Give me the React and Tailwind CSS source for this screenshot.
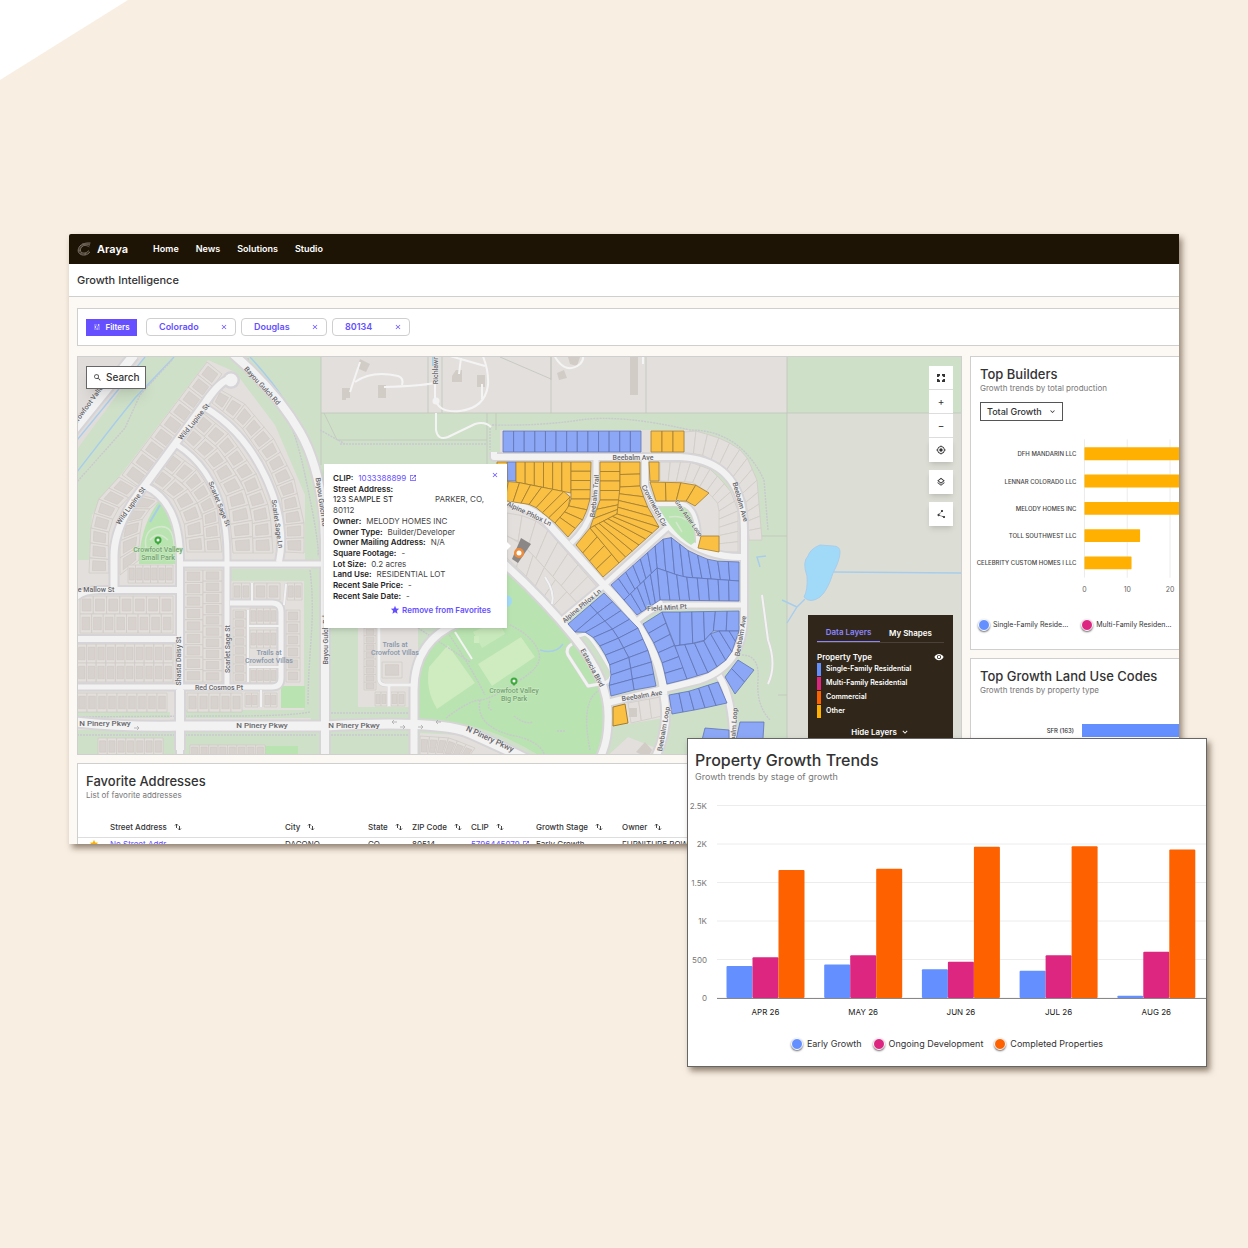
import React from "react";
import {
  MdClose,
  MdKeyboardArrowDown,
  MdMyLocation,
  MdOpenInNew,
  MdOutlineLayers,
  MdSearch,
  MdStar,
  MdTune,
  MdVisibility,
} from "react-icons/md";

const BLUE = "#648fff";
const PINK = "#dc267f";
const ORANGE = "#fe6100";
const YELLOW = "#ffb000";

const NAV_LINKS = ["Home", "News", "Solutions", "Studio"];

const FILTER_CHIPS = [
  { label: "Colorado", width: "w-[90px]" },
  { label: "Douglas", width: "w-[86px]" },
  { label: "80134", width: "w-[78px]" },
];

const BUILDERS = [
  { name: "DFH MANDARIN LLC", value: 34 },
  { name: "LENNAR COLORADO LLC", value: 31 },
  { name: "MELODY HOMES INC", value: 26 },
  { name: "TOLL SOUTHWEST LLC", value: 13 },
  { name: "CELEBRITY CUSTOM HOMES I LLC", value: 11 },
];

const TRENDS = [
  { month: "APR 26", early: 415, ongoing: 530, completed: 1662 },
  { month: "MAY 26", early: 435, ongoing: 555, completed: 1680 },
  { month: "JUN 26", early: 375, ongoing: 470, completed: 1965 },
  { month: "JUL 26", early: 355, ongoing: 555, completed: 1972 },
  { month: "AUG 26", early: 30, ongoing: 600, completed: 1930 },
];

const LAYERS = [
  { label: "Single-Family Residential", color: "bg-[#648fff]" },
  { label: "Multi-Family Residential", color: "bg-[#dc267f]" },
  { label: "Commercial", color: "bg-[#fe6100]" },
  { label: "Other", color: "bg-[#ffb000]" },
];

/* ---------- Map geometry ---------- */

// point at fraction t along a polyline
const pointAt = (line, t) => {
  const lens = line.slice(1).map((p, i) => Math.hypot(p[0] - line[i][0], p[1] - line[i][1]));
  let left = lens.reduce((a, b) => a + b, 0) * t;
  for (let i = 0; i < lens.length; i++) {
    if (left <= lens[i] || i === lens.length - 1) {
      const k = lens[i] ? left / lens[i] : 0;
      return [
        line[i][0] + (line[i + 1][0] - line[i][0]) * k,
        line[i][1] + (line[i + 1][1] - line[i][1]) * k,
      ];
    }
    left -= lens[i];
  }
};

// "x,y x,y" -> [[x, y], ...]
const parse = (s) => s.split(" ").map((p) => p.split(",").map(Number));

// row of n lots between two edges
const Lots = ({ a, b, n, fill = "#e3dfdc", stroke = "#d0cbc7", houses = false }) => {
  const top = parse(a);
  const bottom = parse(b);
  return Array.from({ length: n }, (_, i) => {
    const quad = [
      pointAt(top, i / n),
      pointAt(top, (i + 1) / n),
      pointAt(bottom, (i + 1) / n),
      pointAt(bottom, i / n),
    ];
    const cx = quad.reduce((s, p) => s + p[0], 0) / 4;
    const cy = quad.reduce((s, p) => s + p[1], 0) / 4;
    const house = quad.map((p) => [cx + (p[0] - cx) * 0.66, cy + (p[1] - cy) * 0.66]);
    return (
      <g key={i}>
        <polygon points={quad.join(" ")} fill={fill} stroke={stroke} strokeWidth="0.8" />
        {houses && <polygon points={house.join(" ")} fill="#d8d2ce" stroke="#cec8c3" strokeWidth="0.6" />}
      </g>
    );
  });
};

const HOUSE_ROWS = [
  ["207,362 122,475", "222,374 140,488", 9],
  ["119,477 98,500 91,525 89,573", "138,488 115,512 108,535 109,573", 7],
  ["219,389 244,403 274,439 294,479 304,523 304,553", "212,403 240,425 268,465 282,500 285,552", 13],
  ["203,413 230,435 257,475 270,510 273,553", "193,427 220,450 243,485 252,515 253,553", 10],
  ["193,427 220,450 243,485 252,515 253,553", "183,440 210,465 228,500 233,553", 9],
  ["173,452 200,472 217,505 222,552", "162,468 186,486 202,510 205,552", 8],
  ["162,468 186,486 202,510 205,552", "151,483 172,497 184,520 187,552", 6],
  ["140,495 125,515 120,540 120,575", "160,500 143,515 139,540 139,560", 5],
  ["128,565 173,565", "128,583 173,583", 6],
  ["184,570 184,682", "203,570 203,682", 9],
  ["203,570 203,682", "222,570 222,682", 10],
  ["80,596 173,596", "80,614 173,614", 7],
  ["80,614 173,614", "80,633 173,633", 8],
  ["77,644 173,644", "77,663 173,663", 10],
  ["77,663 173,663", "77,682 173,682", 10],
  ["77,693 167,693", "77,712 167,712", 9],
  ["187,693 242,693", "187,712 242,712", 5],
  ["98,738 163,738", "98,755 163,755", 7],
  ["190,745 265,745", "190,757 265,757", 8],
  ["233,583 250,583", "233,600 250,600", 2],
  ["254,583 280,583", "254,600 280,600", 2],
  ["287,583 302,583", "287,600 302,600", 2],
  ["233,610 233,682", "246,610 246,682", 8],
  ["250,608 277,608", "250,624 277,624", 4],
  ["250,630 277,630", "250,648 277,648", 4],
  ["250,668 277,668", "250,683 277,683", 4],
  ["286,610 286,682", "300,610 300,682", 6],
  ["245,693 258,693", "245,707 258,707", 2],
  ["264,693 277,693", "264,707 277,707", 2],
  ["364,628 364,690", "376,628 376,690", 8],
  ["382,662 382,678", "402,662 402,678", 1],
  ["375,692 387,692", "375,706 387,706", 2],
  ["391,692 405,692", "391,706 405,706", 2],
  ["420,736 450,738 475,748", "420,755 445,756 465,762", 6],
];

const PLAIN_ROWS = [
  ["684,432 697,431 725,440 745,453 757,480 762,540", "684,453 700,454 722,465 739,485 747,505 749,540", 13],
  ["660,462 690,462 712,470 730,490 738,510 738,552", "660,481 692,482 709,493 719,505 719,530 719,552", 14],
  ["507,513 530,517 545,527 598,588", "507,536 517,540 530,552 578,604", 8],
  ["507,536 517,540 530,552 578,604", "507,558 525,575 553,605 562,616", 6],
  ["628,703 660,697", "631,723 662,716", 3],
];

const BLUE_ROWS = [
  ["503,431 641,431", "503,452 641,452", 13],
  ["507,462 516,462", "507,481 516,481", 1],
  ["655,546 668,535 690,552 712,561 739,562", "657,568 683,577 739,581", 9],
  ["657,568 683,577 739,581", "660,600 739,601", 8],
  ["611,585 655,546", "624,600 657,568", 6],
  ["624,600 657,568", "637,615 660,600", 5],
  ["643,624 655,645 663,665 667,684", "662,612 672,640 680,658 687,679", 6],
  ["662,612 680,612", "675,646 680,645", 1],
  ["680,612 739,611", "680,645 703,642 713,631 739,631", 5],
  ["675,646 703,642 713,631 739,631", "687,679 710,672 730,657 739,631", 7],
  ["604,593 638,628 650,655 656,686", "590,605 615,632 629,658 634,690", 9],
  ["590,605 615,632 629,658 634,690", "568,624 576,633 589,632 603,650 612,670 609,684 611,696", 9],
  ["669,695 690,691 718,682", "672,714 700,709 727,703", 5],
  ["738,660 725,677", "754,670 735,694", 2],
  ["705,728 729,730", "698,756 729,756", 1],
  ["740,722 764,722", "736,740 762,756", 1],
];

const YELLOW_ROWS = [
  ["651,431 684,431", "651,452 684,452", 3],
  ["497,462 507,462", "497,481 507,481", 1],
  ["516,462 571,462", "516,482 571,493", 6],
  ["497,481 516,482 571,493 568,508", "497,500 507,501 533,505 555,523", 8],
  ["571,462 571,499", "591,462 590,499", 4],
  ["571,499 568,508 555,523", "590,499 585,517 568,537", 4],
  ["600,462 600,500", "620,462 620,500", 4],
  ["600,500 590,528", "620,500 617,514", 3],
  ["620,462 620,487", "640,462 640,486", 2],
  ["620,487 617,514", "640,486 646,504 659,527", 4],
  ["576,545 603,577", "590,528 619,563", 4],
  ["590,528 617,514", "619,563 659,527", 6],
  ["649,462 659,462", "650,481 659,481", 1],
  ["650,482 692,483 709,493", "656,501 686,501 695,506", 4],
  ["701,536 719,536", "698,548 719,552", 1],
];

const ROADS = [
  { d: "M134 355L72 432", w: 9 },
  { d: "M233 354Q277 392 300 432T325 540V756", w: 8 },
  { d: "M231 380Q222 378 205 403L145 485Q114 524 114 556V590", w: 7 },
  { d: "M206 408Q245 432 266 478T279 562", w: 6 },
  { d: "M177 445Q228 478 227 560V688", w: 5 },
  { d: "M145 486Q180 502 180 560V756", w: 6 },
  { d: "M181 564H325", w: 5 },
  { d: "M76 597Q84 590 100 590H179", w: 6 },
  { d: "M76 639H179", w: 6 },
  { d: "M76 687H272Q281 687 281 678V612Q281 603 272 603H230", w: 5 },
  { d: "M284 605L286 584M252 583V602M248 610V682M248 626H280M248 667H280M261 690V707", w: 2 },
  { d: "M180 690V750", w: 8 },
  { d: "M76 722Q120 727 180 726H325Q440 720 470 733T540 766", w: 9 },
  { d: "M460 622Q414 640 414 690V756", w: 7 },
  { d: "M379 628V680Q380 685 386 685H412M389 686V706", w: 3 },
  { d: "M494 452V457H680Q744 460 744 530V615Q744 665 700 680L607 703", w: 6 },
  { d: "M494 500Q522 502 545 520L604 585Q660 640 664 695Q670 730 654 760", w: 7 },
  { d: "M596 458V490Q594 522 571 543", w: 5 },
  { d: "M645 458V485Q655 518 682 538T744 557", w: 6 },
  { d: "M604 585L667 528", w: 5 },
  { d: "M603 586L562 620", w: 5 },
  { d: "M656 504H682Q699 508 698 545", w: 4 },
  { d: "M745 605H668Q655 605 638 620", w: 5 },
  { d: "M500 560Q540 595 575 638T608 720Q608 742 600 758", w: 7 },
  { d: "M572 638L585 634Q592 636 612 672Q612 683 600 684L588 686L568 655Q565 648 572 644", w: 3 },
  { d: "M719 676Q735 700 733 758", w: 6 },
  { d: "M545 577Q555 592 552 604", w: 2 },
  { d: "M762 595L768 640Q777 665 768 684", w: 2 },
];

const DRIVES = [
  "M435 354V398",
  "M436 401Q440 413 460 411Q485 408 488 385Q489 370 482 354",
  "M436 413V430Q438 441 448 437L475 424Q485 421 491 427",
  "M355 382Q372 370 398 376Q404 378 402 385M350 392L360 362",
  "M384 387Q420 386 434 383",
  "M450 356L485 366M461 358L459 374M482 384V399",
  "M555 357Q566 375 580 364Q584 360 583 355M643 357V364",
  "M455 632L472 659",
];

const PATHS = [
  "M248 358Q250 385 270 395T305 475T318 556",
  "M172 360L140 395L125 428L77 482",
  "M340 444H487M320 430L345 444",
  "M490 428V450M492 425Q540 426 580 420T690 430Q740 430 764 480L768 530",
  "M446 718Q470 700 480 700T520 680Q545 665 538 650T510 625",
  "M480 700Q475 725 510 735Q540 740 545 756",
  "M446 630Q470 665 485 695M418 628L470 662",
  "M77 717Q170 716 230 716T310 712M77 735H316M331 713H410M331 735H408",
  "M310 570Q314 600 311 640T308 705",
  "M742 655Q760 655 758 680T770 720",
  "M600 690Q580 700 590 750",
  "M490 701Q486 710 493 710M514 716Q525 725 533 722M557 731H565",
];

const LABELS = [
  { x: 89, y: 404, r: -54, t: "Crowfoot Valley" },
  { x: 262, y: 386, r: 47, t: "Bayou Gulch Rd" },
  { x: 194, y: 422, r: -51, t: "Wild Lupine St" },
  { x: 131, y: 506, r: -54, t: "Wild Lupine St" },
  { x: 219, y: 504, r: 68, t: "Scarlet Sage St" },
  { x: 277, y: 524, r: 82, t: "Scarlet Sage Ln" },
  { x: 321, y: 502, r: 82, t: "Bayou Gulch Rd" },
  { x: 326, y: 640, r: -90, t: "Bayou Gulch Rd" },
  { x: 179, y: 661, r: -90, t: "Shasta Daisy St" },
  { x: 228, y: 649, r: -90, t: "Scarlet Sage St" },
  { x: 96, y: 590, r: 0, t: "e Mallow St" },
  { x: 219, y: 688, r: 0, t: "Red Cosmos Pt" },
  { x: 105, y: 723, r: 0, t: "N Pinery Pkwy", s: 8 },
  { x: 262, y: 725, r: 0, t: "N Pinery Pkwy", s: 8 },
  { x: 354, y: 725, r: 0, t: "N Pinery Pkwy", s: 8 },
  { x: 490, y: 739, r: 25, t: "N Pinery Pkwy", s: 8 },
  { x: 436, y: 370, r: -90, t: "Richlawn" },
  { x: 633, y: 458, r: 0, t: "Beebalm Ave" },
  { x: 740, y: 502, r: 74, t: "Beebalm Ave" },
  { x: 741, y: 636, r: -80, t: "Beebalm Ave" },
  { x: 642, y: 696, r: -9, t: "Beebalm Ave" },
  { x: 595, y: 496, r: -84, t: "Beebalm Trail" },
  { x: 529, y: 514, r: 25, t: "Alpine Phlox Ln" },
  { x: 582, y: 606, r: -40, t: "Alpine Phlox Ln" },
  { x: 654, y: 506, r: 62, t: "Crowmetch Cir" },
  { x: 689, y: 518, r: 55, t: "Gray Aster Loop", s: 6 },
  { x: 667, y: 608, r: -3, t: "Field Mint Pt" },
  { x: 592, y: 668, r: 62, t: "Estancia Blvd" },
  { x: 664, y: 729, r: -80, t: "Beebalm Loop" },
  { x: 734, y: 730, r: -86, t: "Beebalm Loop" },
];

const ParkMarker = ({ x, y, lines }) => (
  <g>
    <circle cx={x} cy={y} r="3.5" fill="#3faa3f" />
    <path d={`M${x - 2} ${y + 2.5}L${x} ${y + 5}L${x + 2} ${y + 2.5}Z`} fill="#3faa3f" />
    <circle cx={x} cy={y} r="1.5" fill="#fff" />
    {lines.map((line, i) => (
      <text
        key={line}
        x={x}
        y={y + 12 + i * 8}
        textAnchor="middle"
        fontSize="7"
        fontWeight="500"
        fill="#6fa270"
        stroke="#d3ecc8"
        strokeWidth="1"
        paintOrder="stroke"
      >
        {line}
      </text>
    ))}
  </g>
);

const ParcelMap = () => (
  <svg
    viewBox="78 357 883 397"
    preserveAspectRatio="xMinYMin slice"
    className="block w-full h-full font-[Roboto,sans-serif]"
    role="img"
    aria-label="Parcel map"
  >
    <rect x="70" y="350" width="900" height="410" fill="#cee0c8" />

    {/* Land */}
    <polygon points="70,350 150,350 78,448" fill="#e0dcda" />
    <rect x="321" y="350" width="466" height="63" fill="#e3dfdc" />
    <rect x="787" y="413" width="180" height="345" fill="#dcded5" />
    <g fill="#e3dfdc">
      <polygon points="208,360 235,372 275,425 305,495 305,560 88,573 92,515 120,476" />
      <rect x="78" y="560" width="233" height="170" />
      <rect x="358" y="625" width="60" height="82" />
      <rect x="500" y="430" width="190" height="24" />
      <polygon points="497,458 690,458 742,500 742,560 690,560 600,592 562,620 497,555" />
      <polygon points="612,702 663,695 664,718 628,724" />
      <polygon points="628,737 656,748 660,758 605,758" />
      <polygon points="420,733 460,735 510,758 420,758" />
    </g>
    <g fill="#cee0c8">
      <rect x="231" y="569" width="80" height="12" />
      <rect x="304" y="569" width="14" height="145" />
      <rect x="182" y="710" width="130" height="8" />
      <rect x="78" y="712" width="92" height="6" />
      <polygon points="122,475 127,470 144,484 140,488" />
    </g>

    {/* Parks */}
    <g fill="#b9e3b0">
      <path d="M160 500Q140 525 139 564H175Q177 520 160 500Z" />
      <path d="M417 720V690Q420 645 462 625L500 560Q545 600 580 650T604 756H540Q480 718 417 720Z" />
      <rect x="281" y="686" width="24" height="22" />
      <rect x="265" y="746" width="33" height="10" />
    </g>
    <g fill="#cfebc0">
      <path d="M448 645L475 683L437 709Q425 690 429 667Z" />
      <polygon points="478,664 521,637 535,657 492,686" />
      <path d="M473 632L498 620L505 634L482 648Z" opacity="0.7" />
    </g>
    <path
      d="M146 548Q143 530 158 527T174 545M150 540Q158 530 168 540"
      fill="none"
      stroke="#d5e8cf"
      strokeWidth="1.5"
    />
    <rect x="474" y="636" width="5" height="7" fill="#cfebc0" />

    {/* Boundaries */}
    <path
      d="M321 357V465M321 413H787M428 357V413M442 357V413M551 357V380M551 357L551 413M646 357V413M787 357V754M787 413H961M487 413V465M496 413V430M337 440H487M337 440L324 413M500 357L551 379M787 536H748M778 695H787"
      fill="none"
      stroke="#c0c5bb"
      strokeWidth="0.8"
    />

    {/* Water */}
    <g fill="none" stroke="#a8cdec" strokeWidth="1.4">
      <path d="M145 357L77 440M174 357L135 398L115 423L77 472" />
      <path d="M250 357Q290 400 305 440T326 510" />
      <path d="M433 357V366M160 505L150 522" strokeWidth="2" />
      <path d="M833 572L961 573M805 599L797 607L787 623M782 600L797 607M540 650Q555 655 563 644M766 556L757 557L760 567" />
    </g>
    <path
      d="M820 545Q810 549 808 556Q802 562 807 576Q808 590 804 597Q810 604 820 597Q828 590 833 573Q840 560 840 552Q840 546 833 546Z"
      fill="#a1daf8"
      stroke="#a8cdec"
    />
    <circle cx="506" cy="601" r="6" fill="#a1daf8" />

    {/* Lots */}
    {HOUSE_ROWS.map(([a, b, n], i) => (
      <Lots key={i} a={a} b={b} n={n} houses />
    ))}
    {PLAIN_ROWS.map(([a, b, n], i) => (
      <Lots key={i} a={a} b={b} n={n} />
    ))}
    <g fill="#d2ccc7">
      <polygon points="360,359 370,364 366,372 357,368" />
      <path d="M342 388H350V398H346V400H342Z" />
      <rect x="378" y="385" width="8" height="13" />
      <path d="M456 370H462V382H452V376Z" />
      <rect x="477" y="375" width="8" height="12" />
      <path d="M557 373L564 370L567 378L559 380Z" />
      <path d="M568 357H580L577 366L570 364Z" />
      <rect x="630" y="357" width="8" height="38" />
      <polygon points="636,752 645,742 652,750 648,758" />
      <rect x="629" y="708" width="8" height="9" />
    </g>

    <g fill="none" stroke="#c9c8cf" strokeWidth="1.4" strokeDasharray="2 1">
      {PATHS.map((d) => (
        <path key={d} d={d} />
      ))}
    </g>

    {/* Streets: casing first, then the surface */}
    <g fill="none" strokeLinejoin="round">
      {ROADS.map(({ d, w }) => (
        <path key={d} d={d} stroke="#d6d4d6" strokeWidth={w + (w > 3 ? 4 : 1)} />
      ))}
      <circle cx="231" cy="380" r="9" fill="#d6d4d6" />
      <circle cx="658" cy="604" r="7" fill="#d6d4d6" />
      {ROADS.map(({ d, w }) => (
        <path key={d} d={d} stroke="#f3f2f2" strokeWidth={w} />
      ))}
      {DRIVES.map((d) => (
        <path key={d} d={d} stroke="#f5f4f4" strokeWidth="2" />
      ))}
    </g>
    <g fill="#f3f2f2">
      <circle cx="231" cy="380" r="6.5" />
      <circle cx="658" cy="604" r="5" />
      <circle cx="436" cy="401" r="3.5" />
    </g>
    <path d="M659 507H683Q694 512 695 542L691 545Q672 533 659 507Z" fill="#b9e3b0" />
    <path d="M669 517Q680 515 686 520M676 522L682 532" stroke="#d5e8cf" strokeWidth="1.5" fill="none" />

    {/* Classified parcels */}
    {BLUE_ROWS.map(([a, b, n], i) => (
      <Lots key={i} a={a} b={b} n={n} fill="#8ca7f6" stroke="#5f74b4" />
    ))}
    {YELLOW_ROWS.map(([a, b, n], i) => (
      <Lots key={i} a={a} b={b} n={n} fill="#fac044" stroke="#a17c2f" />
    ))}
    <polygon points="613,707 625,704 628,723 613,726" fill="#fac044" stroke="#a17c2f" />
    <polygon points="521,538 531,544 518,563 512,559" fill="#8b8786" />
    <circle cx="519" cy="553" r="5" fill="#ef8c3a" />
    <circle cx="519" cy="553" r="2.5" fill="#fff" />

    {/* Names */}
    {LABELS.map(({ x, y, r, t, s = 7 }, i) => (
      <text
        key={i}
        x={x}
        y={y}
        transform={`rotate(${r} ${x} ${y})`}
        textAnchor="middle"
        dominantBaseline="central"
        fontSize={s}
        fontWeight="500"
        fill="#66666a"
        stroke="#f3f2f2"
        strokeWidth="1"
        strokeOpacity="0.7"
        paintOrder="stroke"
      >
        {t}
      </text>
    ))}
    <g fontSize="7" fontWeight="500" fill="#8797ab" textAnchor="middle">
      <text x="269" y="655">Trails at</text>
      <text x="269" y="663">Crowfoot Villas</text>
      <text x="395" y="647">Trails at</text>
      <text x="395" y="655">Crowfoot Villas</text>
    </g>
    <path
      d="M134 728h5m-2 -2l2 2l-2 2M397 722h-5m2 -2l-2 2l2 2M400 727h5m-2 -2l2 2l-2 2M441 722h-5m2 -2l-2 2l2 2M418 727h5m-2 -2l2 2l-2 2"
      stroke="#aaa"
      strokeWidth="0.8"
      fill="none"
    />
    <ParkMarker x={158} y={540} lines={["Crowfoot Valley", "Small Park"]} />
    <ParkMarker x={514} y={681} lines={["Crowfoot Valley", "Big Park"]} />
  </svg>
);

/* ---------- Small pieces ---------- */

const Logo = () => (
  <svg viewBox="0 0 14 14" className="w-[14px] h-[14px]" fill="none" stroke="#8f877b" aria-hidden="true">
    <path d="M13.500 1C7 .6 3 2.500 1.500 6.500C0 11 3.500 13.500 8 13C10 12.700 12 11.500 12.800 10" strokeWidth="0.8" />
    <path d="M13 3C8 2.200 4.500 4 3.500 7C2.800 10 5 11.500 8 11C10 10.500 11 9.500 11.500 8.500" strokeWidth="0.8" />
    <path d="M13 2C7 1.500 3.500 3.500 2.500 7C1.500 10.500 4 12.500 8 12C10 11.600 11.500 10.500 12.200 9.300" strokeWidth="0.5" />
    <path d="M5 1.800L12.500 5M3 3.500L6 4.500M1 9L4 8.500M3 12L5 10.500M8 13L8.500 11" strokeWidth="0.5" />
  </svg>
);

const SortIcon = () => (
  <svg viewBox="0 0 8 8" className="w-[8px] h-[8px]" fill="none" stroke="currentColor" aria-hidden="true">
    <path d="M2.500 5V1M1 2.500L2.500 1L4 2.500M5.500 3V7M4 5.500L5.500 7L7 5.500" strokeWidth="0.9" />
  </svg>
);

const ExpandIcon = () => (
  <svg viewBox="0 0 10 10" className="w-[10px] h-[10px]" fill="currentColor" aria-hidden="true">
    <path d="M1 1H4V2.500L2.500 4H1ZM6 1H9V4H7.500L6 2.500ZM1 6H2.500L4 7.500V9H1ZM7.500 6H9V9H6V7.500Z" />
  </svg>
);

const NodesIcon = () => (
  <svg viewBox="0 0 10 10" className="w-[10px] h-[10px]" fill="currentColor" stroke="currentColor" aria-hidden="true">
    <path d="M6 2L2.500 6L8 8" fill="none" strokeWidth="0.8" strokeDasharray="2 0.800" />
    <circle cx="6" cy="2" r="0.7" />
    <circle cx="2.500" cy="6" r="0.7" />
    <circle cx="8" cy="8" r="0.7" />
  </svg>
);

const MapButton = ({ label, className, children }) => (
  <button
    type="button"
    aria-label={label}
    className={`flex items-center justify-center w-[24px] h-[24px] bg-white text-[10px] text-[#333] ${className}`}
  >
    {children}
  </button>
);

const CardTitle = ({ title, subtitle }) => (
  <div>
    <h2 className="text-[13px] leading-[16px] font-medium text-[#333]">{title}</h2>
    <p className="text-[8px] leading-[12px] text-[#777]">{subtitle}</p>
  </div>
);

const Dot = ({ color }) => (
  <span className={`w-[12px] h-[12px] rounded-full border border-white shadow-[0_1px_2px_rgba(0,0,0,0.6)] ${color}`} />
);

const PopupRow = ({ label, children }) => (
  <p>
    <span className="font-semibold text-[#222] mr-[5px]">{label}:</span>
    {children}
  </p>
);

/* ---------- Sections ---------- */

const ParcelPopup = () => (
  <div className="absolute left-[246px] top-[107px] w-[183px] h-[164px] bg-white shadow-md px-[9px] pt-[9px] text-[8px] leading-[10px] text-[#444]">
    <button type="button" aria-label="Close" className="absolute right-[8px] top-[7px] text-[#654fff] text-[8px]">
      <MdClose />
    </button>
    <span className="absolute -right-[4px] top-[78px] border-y-4 border-l-4 border-y-transparent border-l-white" />
    <div className="flex flex-col justify-between h-[128px]">
      <PopupRow label="CLIP">
        <a href="#clip" className="inline-flex items-center gap-[3px] text-[#654fff]">
          1033388899 <MdOpenInNew />
        </a>
      </PopupRow>
      <PopupRow label="Street Address" />
      <p className="flex justify-between pr-[14px]">
        <span className="text-[#222]">123 SAMPLE ST</span>
        <span>PARKER, CO,</span>
      </p>
      <p>80112</p>
      <PopupRow label="Owner">MELODY HOMES INC</PopupRow>
      <PopupRow label="Owner Type">Builder/Developer</PopupRow>
      <PopupRow label="Owner Mailing Address">N/A</PopupRow>
      <PopupRow label="Square Footage">-</PopupRow>
      <PopupRow label="Lot Size">0.2 acres</PopupRow>
      <PopupRow label="Land Use">RESIDENTIAL LOT</PopupRow>
      <PopupRow label="Recent Sale Price">-</PopupRow>
      <PopupRow label="Recent Sale Date">-</PopupRow>
    </div>
    <button type="button" className="ml-auto mr-[7px] mt-1 flex items-center gap-[2px] font-semibold text-[#654fff]">
      <MdStar className="text-[10px]" /> Remove from Favorites
    </button>
  </div>
);

const LayersPanel = () => (
  <div className="absolute right-[8px] top-[258px] w-[145px] h-[140px] bg-[#30271a] text-white text-[7px] font-semibold px-[9px] pt-2">
    <div className="flex border-b border-[#4a4238] text-[8px]">
      <button type="button" className="w-[63px] h-[19px] -mb-px border-b border-[#8c86ff] text-[#8c86ff]">
        Data Layers
      </button>
      <button type="button" className="w-[61px] h-[19px]">
        My Shapes
      </button>
    </div>
    <div className="flex items-center justify-between mt-[9px]">
      <h3 className="text-[8px] leading-[10px]">Property Type</h3>
      <MdVisibility className="text-[10px]" />
    </div>
    <ul className="mt-px">
      {LAYERS.map(({ label, color }) => (
        <li key={label} className="flex gap-[5px] h-[13px] mb-px last:mb-0 leading-[11px]">
          <span className={`w-[4px] h-[13px] ${color}`} />
          {label}
        </li>
      ))}
    </ul>
    <button type="button" className="flex items-center gap-[3px] mx-auto mt-[8px] text-[8px]">
      Hide Layers <MdKeyboardArrowDown className="text-[10px]" />
    </button>
  </div>
);

const MapPanel = () => (
  <section className="relative h-[399px] border border-[#cfcfcf] overflow-hidden">
    <ParcelMap />
    <button
      type="button"
      className="absolute left-[8px] top-[9px] flex items-center gap-1 w-[60px] h-[23px] px-[6px] border border-[#666] bg-white shadow-lg text-[10px] font-medium text-[#333]"
    >
      <MdSearch className="text-[9px] shrink-0" /> Search
    </button>
    <div className="absolute right-[8px] top-[9px] flex flex-col">
      <MapButton label="Full screen" className="border-b border-[#ddd]">
        <ExpandIcon />
      </MapButton>
      <MapButton label="Zoom in" className="border-b border-[#ddd]">
        +
      </MapButton>
      <MapButton label="Zoom out" className="border-b border-[#ddd]">
        −
      </MapButton>
      <MapButton label="My location" className="shadow-md">
        <MdMyLocation />
      </MapButton>
      <MapButton label="Layers" className="mt-2 shadow-md">
        <MdOutlineLayers />
      </MapButton>
      <MapButton label="Draw a shape" className="mt-2 shadow-md">
        <NodesIcon />
      </MapButton>
    </div>
    <ParcelPopup />
    <LayersPanel />
  </section>
);

const TopBuilders = () => (
  <section className="h-[294px] border-y border-l border-[#cfcfcf] bg-white pt-[9px] overflow-hidden">
    <div className="pl-[9px]">
      <CardTitle title="Top Builders" subtitle="Growth trends by total production" />
      <div className="relative w-[83px] mt-[8px] text-[#333]">
        <select
          aria-label="Measure"
          className="block appearance-none w-full h-[19px] pl-[6px] border border-[#555] bg-white text-[9px] leading-[16px] font-medium"
        >
          <option>Total Growth</option>
        </select>
        <MdKeyboardArrowDown className="absolute right-[6px] top-[5px] text-[9px] pointer-events-none" />
      </div>
    </div>
    <svg viewBox="0 0 209 170" className="block w-full h-[170px] mt-[12px] font-[Inter,sans-serif]" role="img" aria-label="Top builders">
      {[0, 10, 20].map((tick) => (
        <g key={tick}>
          <line x1={114 + tick * 4.3} x2={114 + tick * 4.3} y1="6" y2="145" stroke="#ececec" />
          <text x={114 + tick * 4.3} y="159" textAnchor="middle" fontSize="7" fill="#666">
            {tick}
          </text>
        </g>
      ))}
      {BUILDERS.map(({ name, value }, i) => (
        <g key={name}>
          <text x="106" y={23 + i * 27.4} textAnchor="end" fontSize="6" fontWeight="500" fill="#444">
            {name}
          </text>
          <rect x="114" y={14 + i * 27.4} width={value * 4.3} height="13" rx="0.5" fill={YELLOW} />
        </g>
      ))}
    </svg>
    <div className="flex items-center gap-[13px] mt-[16px] pl-[7px] text-[7px] text-[#333] whitespace-nowrap">
      <span className="flex items-center gap-[3px]">
        <Dot color="bg-[#648fff]" /> Single-Family Reside...
      </span>
      <span className="flex items-center gap-[3px]">
        <Dot color="bg-[#dc267f]" /> Multi-Family Residen...
      </span>
    </div>
  </section>
);

const LandUseCodes = () => (
  <section className="h-[294px] border-y border-l border-[#cfcfcf] bg-white pt-[9px] pl-[9px]">
    <CardTitle title="Top Growth Land Use Codes" subtitle="Growth trends by property type" />
    <div className="flex items-center mt-[28px] text-[6px] font-medium text-[#333]">
      <span className="w-[94px] text-right mr-[8px]">SFR (163)</span>
      <span className="flex-1 h-[13px] bg-[#648fff]" />
    </div>
  </section>
);

const COLUMNS = [
  { label: "Street Address", width: "w-[175px]" },
  { label: "City", width: "w-[83px]" },
  { label: "State", width: "w-[44px]" },
  { label: "ZIP Code", width: "w-[59px]" },
  { label: "CLIP", width: "w-[65px]" },
  { label: "Growth Stage", width: "w-[86px]" },
  { label: "Owner", width: "" },
];

const FavoriteAddresses = () => (
  <section className="h-[200px] mt-2 border border-[#cfcfcf] bg-white pt-[9px]">
    <div className="pl-2">
      <CardTitle title="Favorite Addresses" subtitle="List of favorite addresses" />
    </div>
    <table className="w-full table-fixed mt-[16px] text-[8px] text-[#333] text-left">
      <thead>
        <tr className="h-[20px] border-b border-[#ddd]">
          <th className="w-[32px]" aria-label="Favorite" />
          {COLUMNS.map(({ label, width }) => (
            <th key={label} className={`font-medium whitespace-nowrap ${width}`}>
              <span className="flex items-center gap-[7px]">
                {label}
                <SortIcon />
              </span>
            </th>
          ))}
        </tr>
      </thead>
      <tbody>
        <tr className="h-[14px] whitespace-nowrap leading-[10px]">
          <td className="pl-[11px] text-[10px] text-[#ffb000]">
            <MdStar />
          </td>
          <td>
            <a href="#address" className="text-[#654fff]">No Street Addr...</a>
          </td>
          <td>DACONO</td>
          <td>CO</td>
          <td>80514</td>
          <td>
            <a href="#clip" className="inline-flex items-center gap-[2px] text-[#654fff]">
              5796445079 <MdOpenInNew />
            </a>
          </td>
          <td>Early Growth</td>
          <td>FURNITURE ROW</td>
        </tr>
      </tbody>
    </table>
  </section>
);

const TrendsChart = () => {
  const base = 259;
  const scale = 0.077;
  return (
    <svg viewBox="0 0 518 290" className="block w-full font-[Inter,sans-serif]" role="img" aria-label="Property growth trends">
      {["0", "500", "1K", "1.5K", "2K", "2.5K"].map((tick, i) => (
        <g key={tick}>
          <line x1="29" x2="518" y1={base - i * 500 * scale} y2={base - i * 500 * scale} stroke="#ececec" />
          <text x="19" y={base + 3 - i * 500 * scale} textAnchor="end" fontSize="8" fill="#777">
            {tick}
          </text>
        </g>
      ))}
      {TRENDS.map(({ month, early, ongoing, completed }, i) => {
        const x = 38.5 + i * 97.7;
        return (
          <g key={month}>
            {[
              [early, BLUE],
              [ongoing, PINK],
              [completed, ORANGE],
            ].map(([value, color], k) => (
              <rect
                key={color}
                x={x + k * 26}
                y={base - value * scale}
                width="26"
                height={value * scale}
                rx="1"
                fill={color}
              />
            ))}
            <text x={x + 39} y={base + 17} textAnchor="middle" fontSize="8" fill="#222">
              {month}
            </text>
          </g>
        );
      })}
      <line x1="29" x2="518" y1={base + 0.5} y2={base + 0.5} stroke="#888" />
    </svg>
  );
};

const GrowthTrends = () => (
  <section className="absolute right-[41px] top-[738px] w-[520px] h-[329px] border border-[#666] bg-white shadow-[3px_4px_6px_rgba(60,40,20,0.55)]">
    <div className="absolute left-[7px] top-[11px]">
      <h2 className="text-[16px] leading-[20px] font-medium text-[#333]">Property Growth Trends</h2>
      <p className="text-[9px] leading-[13px] text-[#777]">Growth trends by stage of growth</p>
    </div>
    <TrendsChart />
    <div className="flex justify-center gap-[11px] mt-[8px] text-[9px] leading-[14px] text-[#333]">
      <span className="flex items-center gap-1">
        <Dot color="bg-[#648fff]" /> Early Growth
      </span>
      <span className="flex items-center gap-1">
        <Dot color="bg-[#dc267f]" /> Ongoing Development
      </span>
      <span className="flex items-center gap-1">
        <Dot color="bg-[#fe6100]" /> Completed Properties
      </span>
    </div>
  </section>
);

export default function App() {
  return (
    <div className="relative min-h-screen overflow-hidden bg-[#f8eee2] font-[Inter,sans-serif]">
      {/* Corner cut */}
      <svg viewBox="0 0 128 80" className="absolute left-0 top-0 w-[128px] h-[80px]" aria-hidden="true">
        <polygon points="0,0 128,0 0,80" fill="#fff" />
      </svg>

      <div className="mx-[69px] mt-[234px] h-[610px] rounded-tl-xs overflow-hidden bg-[#fcf9f5] shadow-[3px_4px_6px_rgba(60,40,20,0.55)]">
        <header className="flex items-center h-[30px] px-2 bg-[#1e1406] text-white">
          <Logo />
          <span className="ml-[6px] text-[11px] font-semibold">Araya</span>
          <nav className="flex gap-[17px] ml-[25px] text-[9px] font-semibold">
            {NAV_LINKS.map((link) => (
              <a key={link} href={`#${link.toLowerCase()}`}>
                {link}
              </a>
            ))}
          </nav>
        </header>

        <div className="flex items-center h-[33px] px-2 border-b border-[#cfcfcf] bg-white">
          <h1 className="text-[11px] font-medium text-[#333]">Growth Intelligence</h1>
        </div>

        <main className="pl-2 pt-[11px]">
          {/* Filters */}
          <div className="flex items-center h-[38px] pl-2 border-y border-l border-[#cfcfcf] bg-white text-[9px] font-semibold text-[#654fff]">
            <button type="button" className="flex items-center justify-center gap-1 w-[51px] h-[17px] mr-[9px] bg-[#654fff] text-white text-[8px]">
              <MdTune /> Filters
            </button>
            <div className="flex gap-[5px]">
              {FILTER_CHIPS.map(({ label, width }) => (
                <span
                  key={label}
                  className={`flex items-center justify-between h-[18px] pl-[12px] pr-[7px] border border-[#cfcfcf] rounded-sm ${width}`}
                >
                  {label}
                  <button type="button" aria-label={`Remove ${label}`} className="text-[8px]">
                    <MdClose />
                  </button>
                </span>
              ))}
            </div>
          </div>

          <div className="flex gap-2 mt-[10px]">
            <div className="flex-1 min-w-0">
              <MapPanel />
              <FavoriteAddresses />
            </div>
            <div className="flex flex-col gap-2 w-[209px] shrink-0">
              <TopBuilders />
              <LandUseCodes />
            </div>
          </div>
        </main>
      </div>

      <GrowthTrends />
    </div>
  );
}
